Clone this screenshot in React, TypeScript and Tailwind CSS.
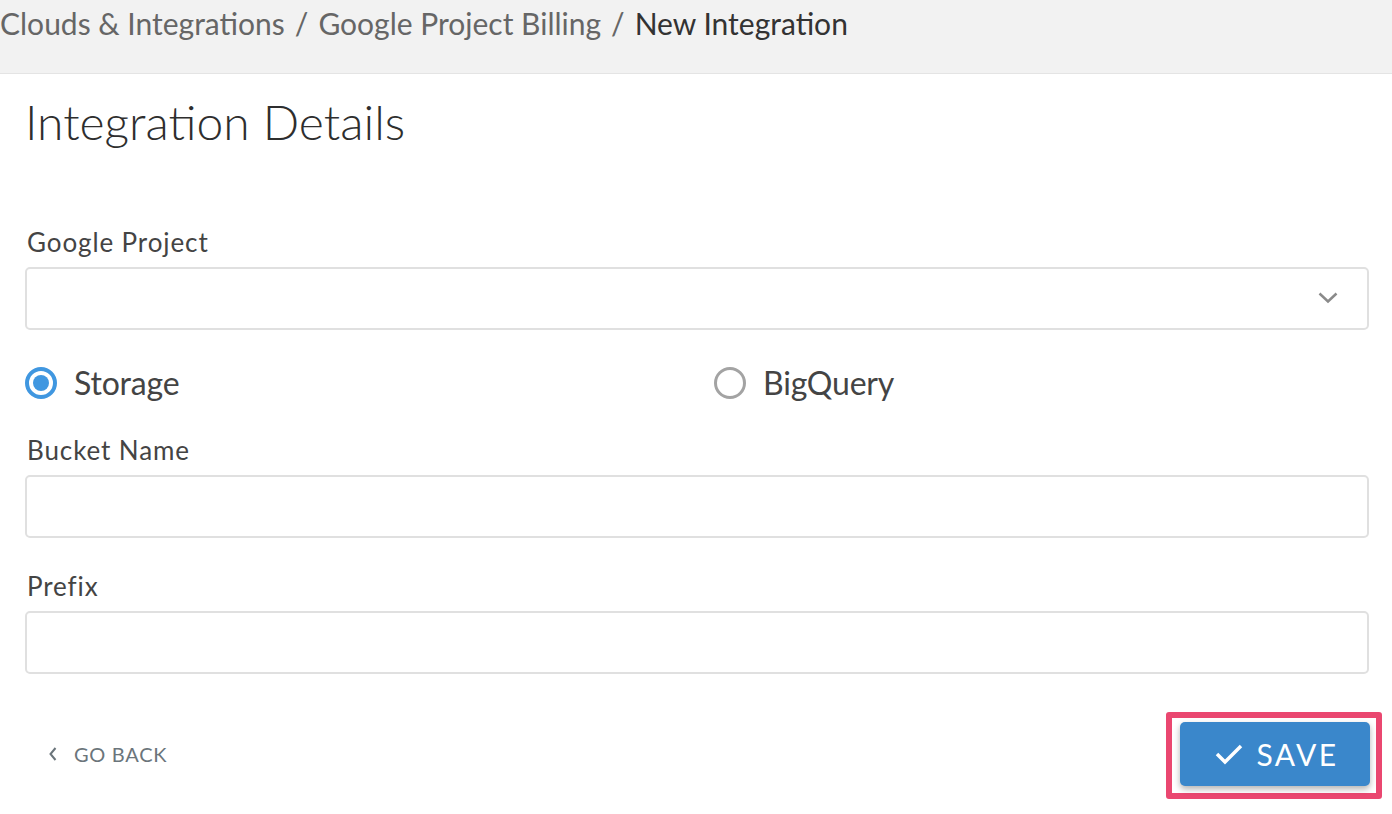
import React from 'react';

const font = { fontFamily: 'Lato, "Open Sans", sans-serif' };

const Field: React.FC<{ label: string; children?: React.ReactNode }> = ({ label, children }) => (
    <div className="flex flex-col">
        <label className="text-[26px] leading-[32px] tracking-[0.9px] text-[#444] pl-[2px] mb-[9px]">{label}</label>
        <div className="relative h-[63px] rounded-[5px] border-2 border-[#e0e0e0] bg-white">{children}</div>
    </div>
);

const Radio: React.FC<{ label: string; checked?: boolean }> = ({ label, checked }) => (
    <div className="flex items-center gap-[17px] h-[40px]">
        {checked ? (
            <span className="flex h-[32px] w-[32px] items-center justify-center rounded-full border-[4px] border-[#4097e0]">
                <span className="h-[16px] w-[16px] rounded-full bg-[#4097e0]" />
            </span>
        ) : (
            <span className="h-[32px] w-[32px] rounded-full border-[3px] border-[#a3a3a3]" />
        )}
        <span className="text-[32px] leading-[40px] tracking-[-0.2px] text-[#444]">{label}</span>
    </div>
);

export default function App() {
    return (
        <div className="h-[814px] w-[1392px] bg-[#f2f2f2] overflow-hidden" style={font}>
            <div className="h-[73px] flex items-start pt-[5px] text-[30px] leading-[36px] text-[#666]">
                <span>Clouds &amp; Integrations</span>
                <span className="mx-[10px]">/</span>
                <span>Google Project Billing</span>
                <span className="mx-[10px]">/</span>
                <span className="text-[#333]">New Integration</span>
            </div>
            <div className="bg-white border-t border-[#e4e4e4] h-[741px] pl-[25px] pr-[23px]">
                <h1 className="text-[48px] font-light text-[#2e2e2e] pt-[19px] leading-[58px]">Integration Details</h1>
                <div className="mt-[75px]">
                    <Field label="Google Project">
                        <svg className="absolute right-[29px] top-[23px]" width="20" height="12" viewBox="0 0 20 12" fill="none">
                            <path d="M1.5 1.5l8.5 8 8.5-8" stroke="#8a8a8a" strokeWidth="2.5" />
                        </svg>
                    </Field>
                </div>
                <div className="grid grid-cols-[655px_1fr] gap-x-[34px] mt-[33px]">
                    <Radio label="Storage" checked />
                    <Radio label="BigQuery" />
                </div>
                <div className="mt-[31px]">
                    <Field label="Bucket Name" />
                </div>
                <div className="mt-[32px]">
                    <Field label="Prefix" />
                </div>
                <div className="flex items-center justify-between mt-[38px]">
                    <button className="flex items-center gap-[17px] pl-[24px] mb-[3px] text-[20px] tracking-[0.7px] text-[#6b757b]">
                        <svg width="8" height="14" viewBox="0 0 8 14" fill="none">
                            <path d="M6.5 1L1.5 7l5 6" stroke="#6b757b" strokeWidth="2" />
                        </svg>
                        GO BACK
                    </button>
                    <div className="-mr-[13px] rounded-[3px] border-[6px] border-[#ea4770] pl-[8px] pr-[6px] pt-[4px] pb-[7px]">
                        <button className="flex h-[64px] w-[190px] items-center justify-center gap-[13px] pl-[4px] rounded-[5px] bg-[#3a87cb] text-[30px] tracking-[2.5px] text-white shadow-[0_3px_6px_rgba(0,0,0,0.3)]">
                            <svg width="28" height="22" viewBox="0 0 28 22" fill="none">
                                <path d="M2 11l8 8L26 3" stroke="white" strokeWidth="3.5" />
                            </svg>
                            SAVE
                        </button>
                    </div>
                </div>
            </div>
        </div>
    );
}
